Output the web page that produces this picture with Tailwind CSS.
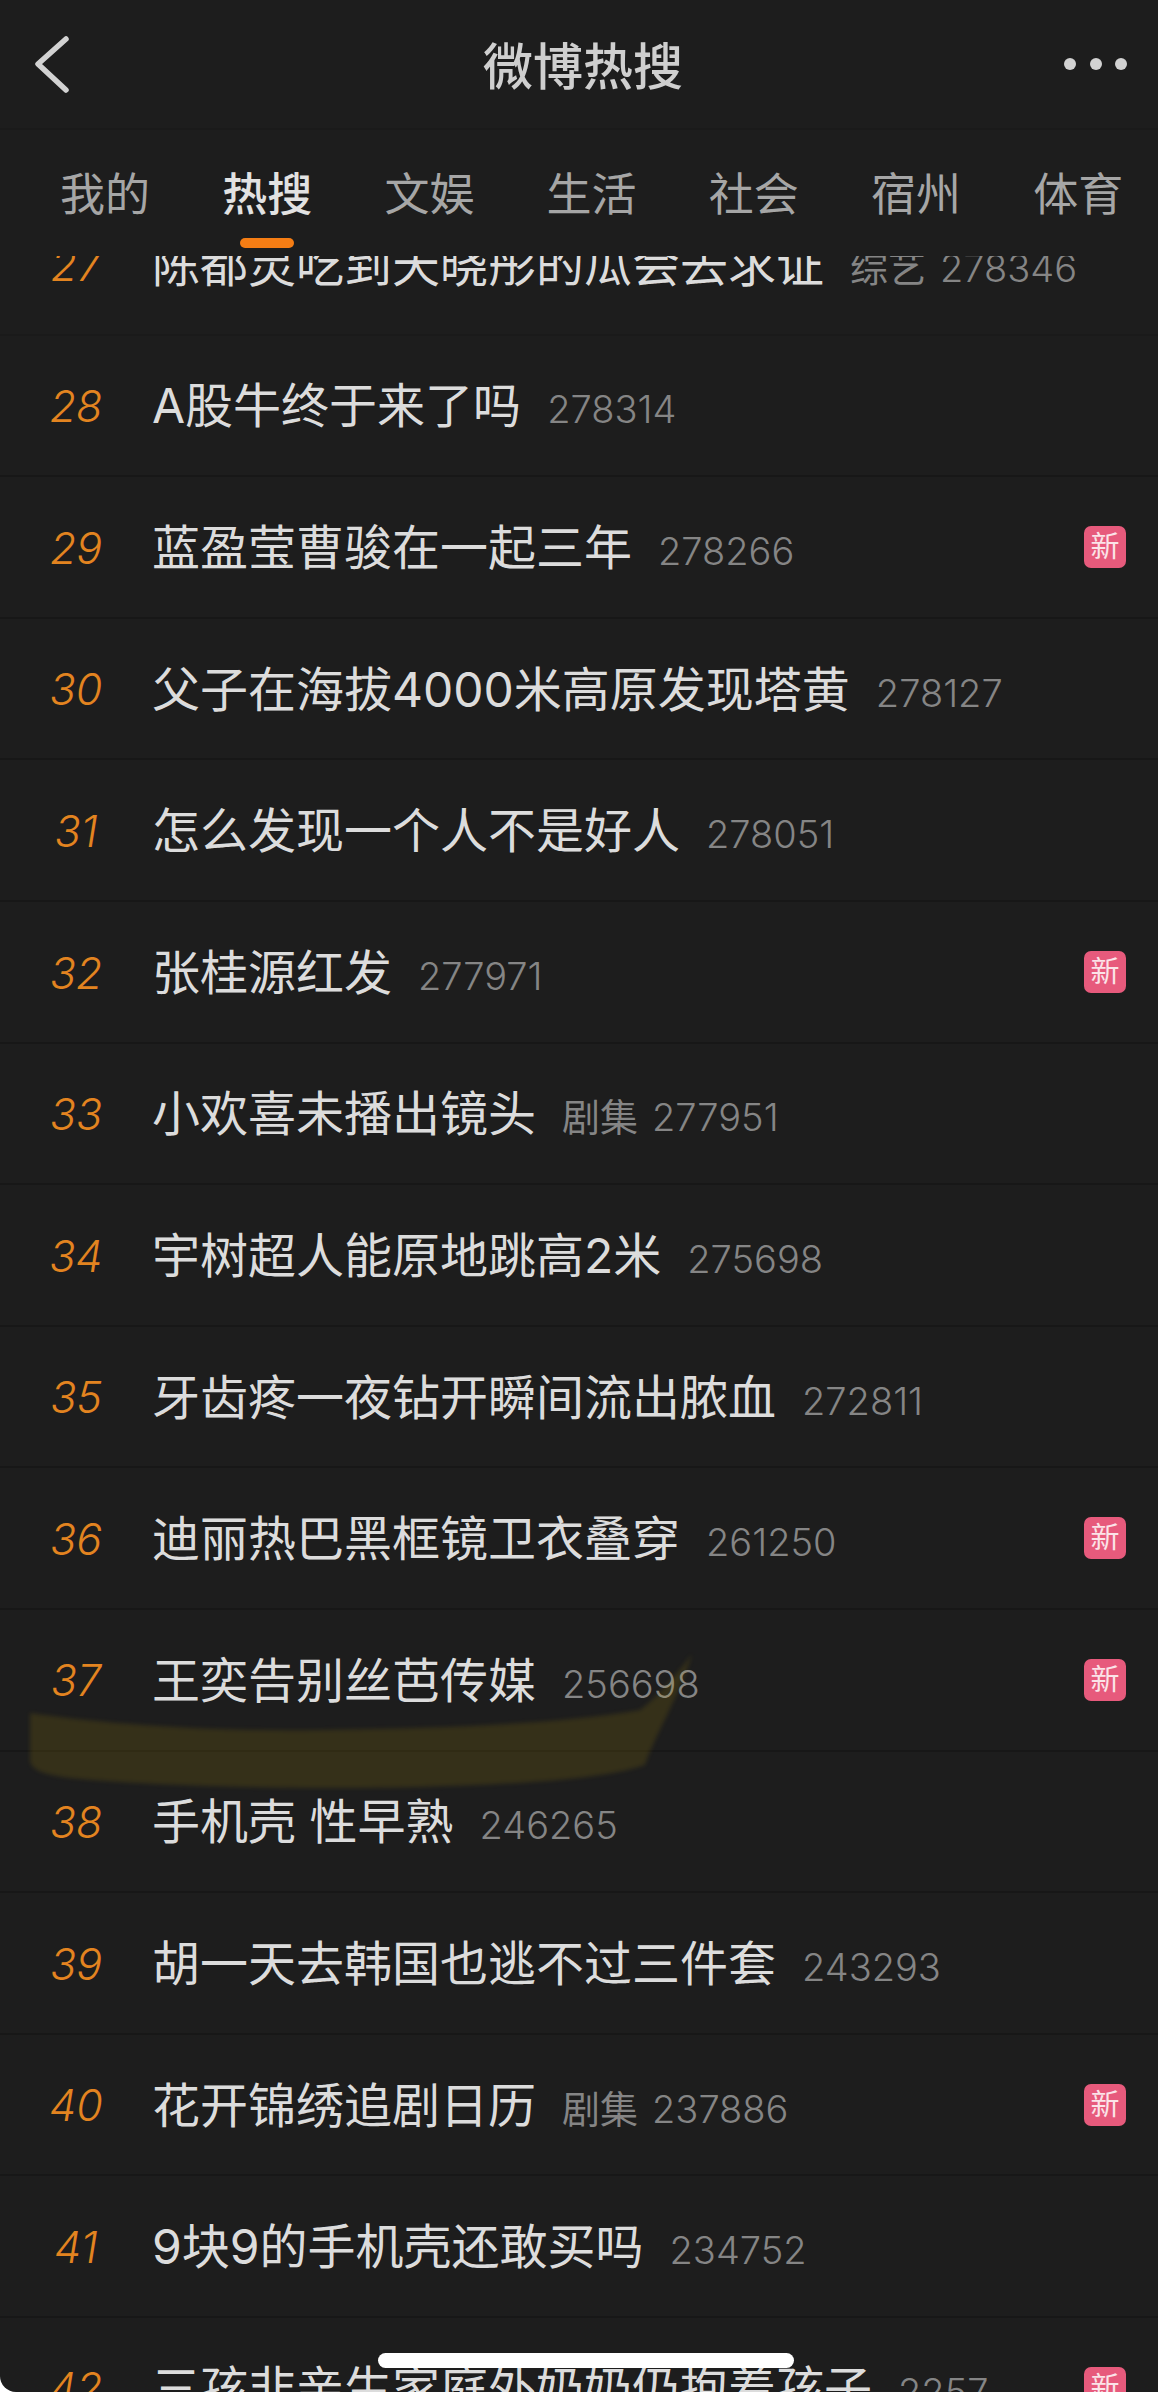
<!DOCTYPE html>
<html lang="zh-CN">
<head>
  <meta charset="UTF-8">
  <meta name="viewport" content="width=device-width, initial-scale=1.0">
  <title>微博热搜</title>
  <script src="https://cdn.jsdelivr.net/npm/@tailwindcss/browser@4"></script>
</head>
<body class="bg-white">
  <div class="relative h-[2392px] w-[1158px] overflow-hidden rounded-bl-[16px] bg-[#1d1d1d] font-['Inter','Noto_Sans_CJK_SC',sans-serif]">

    <!-- top bar -->
    <header class="flex h-[130px] items-center justify-between border-b-2 border-[#1a1a1a]">
      <svg class="ml-[32px] h-[60px] w-[40px]" viewBox="0 0 40 60" fill="none" stroke="#d2d2d2" stroke-width="5.5" stroke-linecap="round" stroke-linejoin="round">
        <path d="M34 5 L6 30 L34 56"></path>
      </svg>
      <h1 class="ml-[30px] pt-[6px] text-[50px] leading-none font-medium text-[#cfcfcf]">微博热搜</h1>
      <div class="mr-[31px] flex gap-[13.5px]">
        <span class="size-[12px] rounded-full bg-[#d2d2d2]"></span>
        <span class="size-[12px] rounded-full bg-[#d2d2d2]"></span>
        <span class="size-[12px] rounded-full bg-[#d2d2d2]"></span>
      </div>
    </header>

    <!-- tabs -->
    <nav class="flex h-[126px] items-start gap-[72.2px] pt-[42px] pl-[60px] text-[45px] leading-none text-[#a6a6a6]">
      <span>我的</span>
      <div class="flex flex-col">
        <span class="font-medium text-[#e2e2e2]">热搜</span>
        <span class="mx-auto mt-[21px] h-[10px] w-[54px] rounded-full bg-[#f57d14]"></span>
      </div>
      <span>文娱</span>
      <span>生活</span>
      <span>社会</span>
      <span>宿州</span>
      <span>体育</span>
    </nav>

    <!-- list, scrolled so that row 27 is cut by the tabs -->
    <div class="h-[2136px] overflow-hidden">
      <ul id="rows" class="-mt-[62px] text-[#dcdcdc]"></ul>
    </div>

    <!-- marker stroke drawn over the screenshot -->
    <svg class="absolute inset-0 blur-[2px]" width="1158" height="2392" viewBox="0 0 1158 2392">
      <path d="M30 1713 C90 1722 200 1732 320 1730 C450 1728 560 1724 640 1710 C660 1695 680 1670 692 1654 C680 1695 655 1735 645 1765 C600 1780 520 1784 420 1787 C300 1790 150 1786 70 1778 C45 1775 30 1770 30 1760 Z" fill="#dcb000" fill-opacity="0.13"></path>
    </svg>

    <!-- home indicator -->
    <div class="absolute top-[2353px] left-[378px] h-[15px] w-[416px] rounded-full bg-white"></div>
  </div>

  <script>
    const items = [
      [27, '陈都灵吃到天晓彤的瓜会去求证', '综艺', '278346', false],
      [28, 'A股牛终于来了吗', '', '278314', false],
      [29, '蓝盈莹曹骏在一起三年', '', '278266', true],
      [30, '父子在海拔4000米高原发现塔黄', '', '278127', false],
      [31, '怎么发现一个人不是好人', '', '278051', false],
      [32, '张桂源红发', '', '277971', true],
      [33, '小欢喜未播出镜头', '剧集', '277951', false],
      [34, '宇树超人能原地跳高2米', '', '275698', false],
      [35, '牙齿疼一夜钻开瞬间流出脓血', '', '272811', false],
      [36, '迪丽热巴黑框镜卫衣叠穿', '', '261250', true],
      [37, '王奕告别丝芭传媒', '', '256698', true],
      [38, '手机壳 性早熟', '', '246265', false],
      [39, '胡一天去韩国也逃不过三件套', '', '243293', false],
      [40, '花开锦绣追剧日历', '剧集', '237886', true],
      [41, '9块9的手机壳还敢买吗', '', '234752', false],
      [42, '三孩非亲生家庭外奶奶仍抱着孩子', '', '2257', true],
    ];

    document.getElementById('rows').innerHTML = items.map(([rank, title, tag, count, isNew]) => `
      <li class="flex h-[141.6px] items-center border-b-2 ${rank === 27 ? 'border-[#1a1a1a]' : 'border-[#171717]'}">
        <span class="w-[152px] pt-[2px] text-center text-[43px] font-light text-[#e38420] italic">${rank}</span>
        <span class="flex items-baseline pt-[2px]">
          <span class="text-[48px]">${title}</span>
          ${tag ? `<span class="ml-[26px] text-[38px] text-[#858585]">${tag}</span>` : ''}
          <span class="${tag ? 'ml-[14px]' : 'ml-[26px]'} text-[38px] font-light text-[#858585]">${count}</span>
        </span>
        ${isNew ? '<span class="mr-[32px] ml-auto flex size-[42px] items-center justify-center rounded-[7px] bg-[#e75a7c] text-[29px] text-[#fbe3e8]">新</span>' : ''}
      </li>
    `).join('');
  </script>
</body>
</html>
